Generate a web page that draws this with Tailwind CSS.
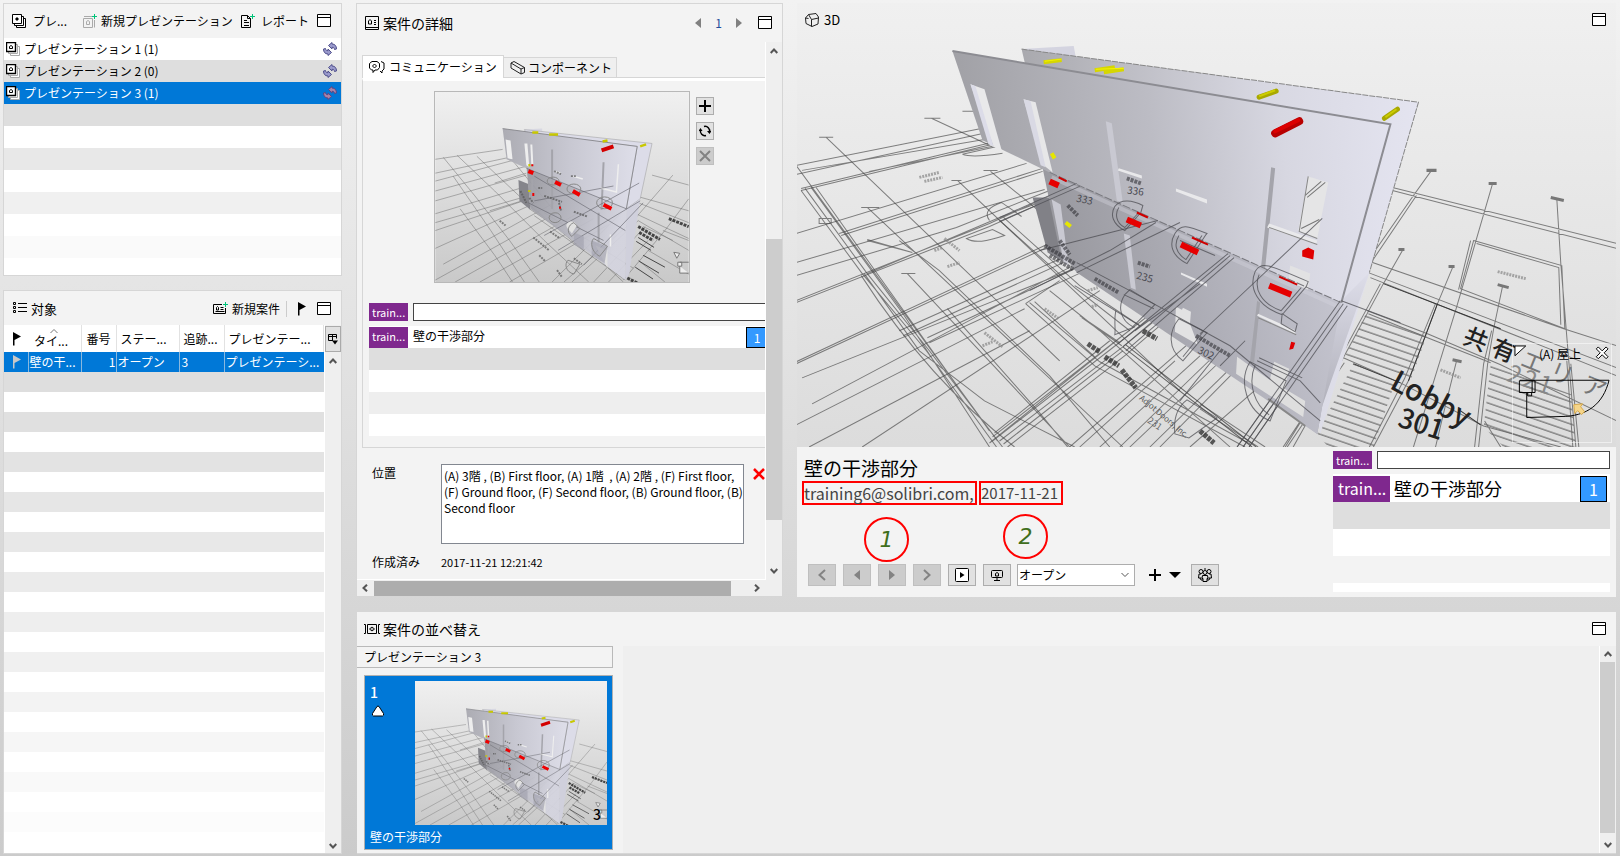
<!DOCTYPE html>
<html lang="ja">
<head>
    <meta charset="UTF-8">
    <meta name="viewport" content="width=device-width, initial-scale=1.0">
    <title>案件の詳細</title>
    <script src="https://cdn.jsdelivr.net/npm/@tailwindcss/browser@4"></script>
</head>
<body class="h-screen flex gap-3.5 pt-[3px] pl-[3px] pr-1 pb-0.5 overflow-hidden bg-linear-to-b from-[#f2f2f2] to-[#cbcbcb] text-black text-xs font-['Noto_Sans_CJK_JP',sans-serif]">

    <!-- Shared icons -->
    <svg class="absolute size-0" xmlns="http://www.w3.org/2000/svg">
        <symbol id="i-window" viewBox="0 0 14 14"><path d="M.5 .5h13v12H.5zM.5 3.5h13" fill="#fff" stroke="#000"/></symbol>
        <symbol id="i-stack" viewBox="0 0 14 14"><path d="M4.500 4.500h9v9h-9z" fill="#fff" stroke="#aaa"/><path d="M2.500 2.500h9v9h-9z" fill="#fff" stroke="#aaa"/><path d="M.5 .5h9v9h-9z" fill="#fff" stroke="#000" stroke-width="1.400"/><path d="M3.500 6.500v-2l1.500-1 1.500 1v2z" fill="none" stroke="#000"/></symbol>
        <symbol id="i-stack-dark" viewBox="0 0 14 14"><path d="M4.500 4.500h9v9h-9z" fill="#fff" stroke="#000"/><path d="M2.500 2.500h9v9h-9z" fill="#fff" stroke="#000"/><path d="M.5 .5h9v9h-9z" fill="#fff" stroke="#000"/><path d="M3 5l2-2 2 2-2 2z" fill="#000"/></symbol>
        <symbol id="i-sync" viewBox="0 0 14 14"><path d="M5.500 3.500L9 .5V2c3 0 4.500 2 4.500 5l-2 .5c0-1.500-1-2.200-2.500-2.200V7zM8.500 10.500L5 13.500V12c-3 0-4.500-2-4.500-5l2-.5c0 1.500 1 2.200 2.500 2.200V7z" fill="#9a9acc" stroke="#50508c"/></symbol>
        <symbol id="i-sync-red" viewBox="0 0 14 14"><path d="M5.500 3.500L9 .5V2c3 0 4.500 2 4.500 5l-2 .5c0-1.500-1-2.200-2.500-2.200V7zM8.500 10.500L5 13.500V12c-3 0-4.500-2-4.500-5l2-.5c0 1.500 1 2.200 2.500 2.200V7z" fill="#a883a8" stroke="#5c4684"/></symbol>
        <symbol id="i-flag" viewBox="0 0 10 14"><path d="M1 0l8 4.500L2.500 8v5.500H1z" fill="currentColor"/></symbol>
        <symbol id="i-up" viewBox="0 0 8 6"><path d="M.7 5L4 1.500 7.300 5" fill="none" stroke="#555" stroke-width="2"/></symbol>
        <symbol id="i-down" viewBox="0 0 8 6"><path d="M.7 1L4 4.500 7.300 1" fill="none" stroke="#555" stroke-width="2"/></symbol>
        <symbol id="i-left" viewBox="0 0 6 8"><path d="M5 .7L1.500 4 5 7.300" fill="none" stroke="#555" stroke-width="2"/></symbol>
        <symbol id="i-right" viewBox="0 0 6 8"><path d="M1 .7L4.500 4 1 7.300" fill="none" stroke="#555" stroke-width="2"/></symbol>
        <linearGradient id="floor" x1="0" y1="0" x2="0" y2="1"><stop offset="0" stop-color="#f0f0f0"/><stop offset="1" stop-color="#c9c9c9"/></linearGradient>
        <linearGradient id="twall" x1="0" y1="0" x2="1" y2="0"><stop offset="0" stop-color="#acacb3"/><stop offset=".5" stop-color="#c8c8d2"/><stop offset="1" stop-color="#dedee9"/></linearGradient>
        <linearGradient id="tlow" x1="0" y1="0" x2="1" y2=".3"><stop offset="0" stop-color="#96969d"/><stop offset=".6" stop-color="#b9b9c3"/><stop offset="1" stop-color="#d4d4df"/></linearGradient>

        <!-- Slide preview of the model -->
        <symbol id="slide" viewBox="0 0 256 192">
            <path d="M0 0h256v192H0z" fill="url(#floor)"/>
            <path d="M0 68L68 58M0 82L75 66M0 90L90 66M0 100L92 75M0 110L92 84M0 123L90 96M0 132L90 106M0 140L95 108M0 158L110 108M8 174L120 112M0 190L130 118M20 192L145 122M45 192L160 128M75 192L175 134M22 64L60 100 110 150 155 192M42 65L90 110 150 160M8 66L40 105 75 150 105 192M18 85L56 140 90 192M25 118L60 165 78 192M72 62L120 120M95 118L150 155 190 192M100 125L192 190M110 122L200 178M60 92L92 82M55 120L94 108M130 192L200 130 240 84M138 192L205 130M118 192L190 120M160 192L212 136M219 84L256 94M206 106L256 120M200 110L256 132M192 118L256 148M205 130L256 160M190 190L232 140 256 108M230 140L256 150M210 136L240 150M215 160L256 184M205 170L232 192M175 192L215 150" fill="none" stroke="#606060" stroke-opacity=".45"/>
            <path d="M90 38l18-1v8z" fill="#d8d8e2"/>
            <path d="M90 38L219 52 207 108 193 118 204 55 92 42z" fill="#dcdce8" stroke="#999" stroke-width=".5"/>
            <path d="M193 118L207 108 196 184 192 190z" fill="#d0d0dc"/>
            <path d="M84 89l10 4 2 26-11-9z" fill="#85858b"/>
            <path d="M92 74L193 118 192 190 96 118z" fill="url(#tlow)" fill-opacity=".92"/>
            <path d="M68 37L204 55 193 118 92 77 72 68z" fill="url(#twall)"/>
            <path d="M68 37L204 55 193 118" fill="none" stroke="#8d8d92"/>
            <path d="M71 48l5 1 2 19-5-1zM90 52l3 0 2 24-3-2zM96 53h2l1 20h-2z" fill="#eee"/>
            <path d="M118 58v60M170 71l-2 48M165 122v30M98 88v22" stroke="#a4a4ab" stroke-width="2"/>
            <path d="M185 73l-2 28-16-4M139 85l10 3M120 80l7 2M177 144v12" fill="none" stroke="#eee" stroke-width="1.500"/>
            <path d="M92 77L193 118M100 110L180 95M110 145L206 92M124 160L207 110M150 175L210 112M94 112L170 150M100 85L192 140" fill="none" stroke="#606068" stroke-opacity=".6"/>
            <path d="M133 137c-3-6 8-9 10-2l-5 8zM162 155l12 5v18z" fill="#e1e1e1"/>
            <path d="M140 142l10 4v14l-10-6zM158 150l16 6-3 17-13-8z" fill="#a4a4b0" fill-opacity=".7"/>
            <g fill="none" stroke="#888"><ellipse cx="119" cy="90" rx="6" ry="4"/><ellipse cx="140" cy="98" rx="7" ry="5"/><ellipse cx="171" cy="112" rx="8" ry="6"/><ellipse cx="121" cy="127" rx="6" ry="5"/><path d="M140 132l6 6-8 8c-6-4-4-12 2-14zM160 148l14 8-8 10c-8-4-10-14-6-18zM134 170l12 4-6 10c-8-2-10-10-6-14z"/></g>
            <path d="M86 100l6 12M95 107l4 5M125 112l2 8M110 105l18 6M140 121l14 5M116 141l10 7M99 147l16 13M104 97h4M120 80l7 3M137 85h5M123 180l5 7M140 168l8 6M65 130l6 5M105 165l6 6" stroke="#555" stroke-opacity=".7" stroke-width="2" stroke-dasharray="2 1"/>
            <path d="M205 136l22 13M206 142l14 8M236 128l20 8M194 188l12 6" stroke="#222" stroke-opacity=".8" stroke-width="3" stroke-dasharray="3 1"/>
            <path d="M205 147l16 10M203 151l15 9M210 165l22 12M206 171l20 12M202 177l18 12" stroke="#444"/>
            <path d="M241 162l6 1-3 5zM245 172h4v4h-4zM247 176v7h9M247 172h9" fill="#eee" stroke="#777"/>
            <path d="M168 59l12-4" stroke="#d40000" stroke-width="4"/>
            <path d="M94 80l5 2M121 91l6 3M139 100l7 4M170 114l8 4" stroke="#e00" stroke-width="4"/>
            <path d="M98 73v2M99 102v3M126 116v2" stroke="#e00" stroke-width="2"/>
            <path d="M98 41h6M115 43h9M169 50l5-1M207 55l6-2M94 74h2M95 99v2" stroke="#c8c800" stroke-width="2.500"/>
        </symbol>
    </svg>

    <!-- Left column -->
    <aside class="w-[339px] shrink-0 flex flex-col gap-3.5">
        <section class="h-[273px] shrink-0 flex flex-col border border-[#d6d6d6] bg-white overflow-hidden">
            <header class="h-[34px] shrink-0 flex items-center pl-2 bg-[#f3f3f3] whitespace-nowrap">
                <h2 class="flex items-center gap-[7px] w-[71px]">
                    <svg class="size-3.5"><use href="#i-stack-dark"/></svg>プレ...
                </h2>
                <button class="flex items-center gap-1 w-[158px]">
                    <svg class="size-3.5 shrink-0" viewBox="0 0 14 14" fill="none"><path d="M.5 4.500h9v9h-9zM11.500 6v7.500" stroke="#aaa"/><path d="M3.500 10.500v-3l1.500-1 1.500 1v3zM1 2.500h8" stroke="#aaa"/><path d="M11.500 0v5M9 2.500h5" stroke="#00c47a"/></svg>新規プレゼンテーション
                </button>
                <button class="flex items-center gap-1.5 w-[76px]">
                    <svg class="size-3.5 shrink-0" viewBox="0 0 14 14" fill="none"><path d="M.5 1.500h6l3 3v9h-9zM6.500 1.500v3h3M3 6.500h3M3 8.500h5M3 11.500h5" stroke="#000"/><path d="M11.500 0v5M9 2.500h5" stroke="#00c47a"/></svg>レポート
                </button>
                <button aria-label="最大化"><svg class="size-3.5 block"><use href="#i-window"/></svg></button>
            </header>
            <ul id="presentations" class="flex-1 whitespace-nowrap">
                <li><button class="w-full h-[22px] flex items-center gap-1 pl-0.5 pr-1"><svg class="size-3.5"><use href="#i-stack"/></svg>プレゼンテーション 1 (1)<svg class="size-3.5 ml-auto"><use href="#i-sync"/></svg></button></li>
                <li class="bg-[#dedede]"><button class="w-full h-[22px] flex items-center gap-1 pl-0.5 pr-1"><svg class="size-3.5"><use href="#i-stack"/></svg>プレゼンテーション 2 (0)<svg class="size-3.5 ml-auto"><use href="#i-sync"/></svg></button></li>
                <li class="bg-[#0078d7] text-white"><button class="w-full h-[22px] flex items-center gap-1 pl-0.5 pr-1"><svg class="size-3.5"><use href="#i-stack"/></svg>プレゼンテーション 3 (1)<svg class="size-3.5 ml-auto"><use href="#i-sync-red"/></svg></button></li>
                <li class="h-[22px] bg-[#dedede]"></li>
                <li class="h-[22px]"></li>
                <li class="h-[22px] bg-[#e8e8e8]"></li>
                <li class="h-[22px]"></li>
                <li class="h-[22px] bg-[#f0f0f0]"></li>
                <li class="h-[22px]"></li>
                <li class="h-[22px] bg-[#fafafa]"></li>
            </ul>
        </section>

        <section class="flex-1 min-h-0 flex flex-col border border-[#d6d6d6] bg-white overflow-hidden">
            <header class="h-[34px] shrink-0 flex items-center pl-[9px] pr-2.5 pt-px bg-[#f3f3f3] whitespace-nowrap">
                <h2 class="flex items-center gap-1 text-[13px] mr-auto">
                    <svg class="size-3.5" viewBox="0 0 14 14" fill="none" stroke="#000"><path d="M.5 1.500h2v2h-2zM.5 5.500h2v2h-2zM.5 9.500h2v2h-2zM5 2.500h9M5 6.500h9M5 10.500h9"/></svg>対象
                </h2>
                <button class="flex items-center gap-1 pr-1.5 border-r border-[#ccc]">
                    <svg class="h-3.5 w-[15px]" viewBox="0 0 15 14" fill="none"><path d="M9 2.500H.5v9h12V6M2.500 9.500h9M3.500 8V5.500l1-1 1 1V8zM7.500 5.500h3M7.500 7.500h3" stroke="#000"/><path d="M12.500 0v5M10 2.500h5" stroke="#00c47a"/></svg>新規案件
                </button>
                <button class="mx-2.5" aria-label="フラグ"><svg class="h-3.5 w-2.5 block"><use href="#i-flag"/></svg></button>
                <button aria-label="最大化"><svg class="size-3.5 block"><use href="#i-window"/></svg></button>
            </header>
            <div class="flex-1 min-h-0 flex">
                <div class="flex-1 min-w-0 overflow-hidden">
                    <table class="w-full table-fixed border-collapse whitespace-nowrap">
                        <colgroup><col class="w-6"><col class="w-[53px]"><col class="w-[35px]"><col class="w-[63px]"><col class="w-[45px]"><col></colgroup>
                        <thead>
                            <tr class="h-[27px]">
                                <th class="p-0 pl-2"><svg class="h-3.5 w-2.5"><use href="#i-flag"/></svg></th>
                                <th class="p-0 font-normal text-left border-r border-[#e2e2e2]"><svg class="w-2 h-1 mx-auto" viewBox="0 0 8 4"><path d="M.5 4L4 .5 7.500 4" fill="none" stroke="#777"/></svg><span class="block leading-4 pl-1.5">タイ...</span></th>
                                <th class="p-0 font-normal border-r border-[#e2e2e2]">番号</th>
                                <th class="p-0 pl-1 font-normal text-left border-r border-[#e2e2e2]">ステー...</th>
                                <th class="p-0 pl-1 font-normal text-left border-r border-[#e2e2e2]">追跡...</th>
                                <th class="p-0 pl-1 font-normal text-left border-r border-[#e2e2e2]">プレゼンテー...</th>
                            </tr>
                        </thead>
                        <tbody id="issues">
                            <tr class="h-5 bg-[#0078d7] text-white">
                                <td class="p-0 pl-2 border-r border-[#8ab8de]"><svg class="h-3.5 w-2.5 text-[#c8c8c8]"><use href="#i-flag"/></svg></td>
                                <td class="p-0 pl-px border-r border-[#8ab8de]">壁の干...</td>
                                <td class="p-0 text-right border-r border-[#8ab8de]">1</td>
                                <td class="p-0 pl-px border-r border-[#8ab8de]">オープン</td>
                                <td class="p-0 pl-0.5 border-r border-[#8ab8de]">3</td>
                                <td class="p-0 pl-px">プレゼンテーシ...</td>
                            </tr>
                        </tbody>
                    </table>
                </div>
                <div class="w-4 ml-px flex flex-col items-center bg-[#efefef]">
                    <button class="w-full h-[26px] mt-px grid place-items-center border border-[#aaa] bg-[#e1e1e1]" aria-label="列"><svg class="size-3" viewBox="0 0 12 12" fill="none" stroke="#000"><path d="M6 7.500H1.500v-6h8v4M1.500 3.500h8M5.500 1.500v6"/><path d="M5 7.500h6l-3 4z" fill="#000" stroke="none"/></svg></button>
                    <svg class="w-2 h-1.5 mt-1.5"><use href="#i-up"/></svg>
                    <svg class="w-2 h-1.5 mt-auto mb-1"><use href="#i-down"/></svg>
                </div>
            </div>
        </section>
    </aside>

    <div class="flex-1 min-w-0 flex flex-col gap-[15px]">
        <div class="flex-1 min-h-0 flex gap-3.5">

            <!-- Issue details -->
            <section class="w-[427px] shrink-0 flex flex-col border border-[#d6d6d6] bg-[#f3f3f3]">
                <header class="h-[38px] shrink-0 flex items-center pl-2 pr-2.5 pb-px">
                    <h2 class="flex items-center gap-1 text-sm">
                        <svg class="size-3.5" viewBox="0 0 14 14" fill="none" stroke="#000"><path d="M.5 .5h13v13H.5zM1 11.500h12M3.500 8V5l1.500-1.500L6.500 5v3zM9 4.500h2M9 6.500h2M9 8.500h2"/></svg>案件の詳細
                    </h2>
                    <nav class="ml-auto mr-4 flex items-center gap-3.5">
                        <button aria-label="前へ"><svg class="w-1.5 h-2.5 block" viewBox="0 0 6 10"><path d="M6 0v10L0 5z" fill="#808080"/></svg></button>
                        <a href="#" class="text-[#1f4e9c]">1</a>
                        <button aria-label="次へ"><svg class="w-1.5 h-2.5 block" viewBox="0 0 6 10"><path d="M0 0v10l6-5z" fill="#808080"/></svg></button>
                    </nav>
                    <button aria-label="最大化"><svg class="size-3.5 block"><use href="#i-window"/></svg></button>
                </header>
                <div class="flex-1 min-h-0 flex">
                    <div class="flex-1 min-w-0 overflow-hidden pl-[5px] pt-[13px] border-r border-b border-white">
                        <div class="flex items-end whitespace-nowrap">
                            <button class="h-[23px] w-[142px] pl-1.5 flex items-center gap-1 border border-b-0 border-[#d6d6d6] bg-white">
                                <svg class="w-4 h-3.5" viewBox="0 0 16 14" fill="none" stroke="#000"><path d="M3 1.500h5l2.500 2v4l-2 2.500H6l-2 2.500V10H2.500L.5 8V3.500z"/><path d="M12 1.500l3 1.500v6l-2 2v2l-2-2M3.500 6l2-2 2 2-2 2z"/></svg>コミュニケーション
                            </button>
                            <button class="h-[21px] w-[113px] pl-1.5 flex items-center gap-0.5 border border-l-0 border-[#d6d6d6] bg-[#efefef]">
                                <svg class="w-4 h-3.5" viewBox="0 0 16 14" fill="none" stroke="#222"><path d="M1 2l3-1.500 10.500 6v5L11 13 1 7zM1 2l10 6v5M11 8l3.500-1.500"/></svg>コンポーネント
                            </button>
                            <span class="flex-1 border-b border-[#d6d6d6]"></span>
                        </div>
                        <div class="border-l border-b border-[#d6d6d6] border-t-[3px] border-t-white pl-1.5 h-[370px]">
                            <div class="flex justify-center gap-1.5 pt-2.5 pr-[50px]">
                                <svg class="w-64 h-48 shrink-0 ml-16 border border-[#b8b8b8]" preserveAspectRatio="none"><use href="#slide"/></svg>
                                <div class="flex flex-col gap-[7px] pt-1.5">
                                    <button class="size-[18px] grid place-items-center border border-[#adadad] bg-[#e1e1e1]" aria-label="追加"><svg class="size-3" viewBox="0 0 12 12"><path d="M6 0v12M0 6h12" stroke="#000" stroke-width="2"/></svg></button>
                                    <button class="size-[18px] grid place-items-center border border-[#adadad] bg-[#e1e1e1]" aria-label="更新"><svg class="size-3" viewBox="0 0 12 12" fill="none" stroke="#000" stroke-width="1.500"><path d="M5 1.500A4.500 4.500 0 0 1 10.500 7M7 10.500A4.500 4.500 0 0 1 1.500 5"/><path d="M8 6h4.500L10.500 9zM-.5 6h4L1.500 3z" fill="#000" stroke="none"/></svg></button>
                                    <button class="size-[18px] grid place-items-center border border-[#bfbfbf] bg-[#ccc]" aria-label="削除"><svg class="size-3" viewBox="0 0 12 12"><path d="M1 1l10 10M11 1L1 11" stroke="#838383" stroke-width="2"/></svg></button>
                                </div>
                            </div>
                            <div class="flex gap-[5px] mt-5">
                                <label for="comment" class="w-[39px] h-[18px] pl-[3px] leading-[18px] text-[11px] bg-[#7f288e] text-white">train...</label>
                                <input id="comment" type="text" class="flex-1 h-[18px] border border-r-0 border-[#444] bg-white outline-none">
                            </div>
                            <ul class="mt-[5px]">
                                <li class="flex h-[22px] border-t border-white bg-white whitespace-nowrap">
                                    <span class="w-[39px] pl-[3px] leading-[18px] text-[11px] bg-[#7f288e] text-white">train...</span>
                                    <span class="pl-[5px] leading-[18px]">壁の干渉部分</span>
                                    <a href="#" class="ml-auto w-[19px] grid place-items-center pl-0.5 border border-r-0 border-black bg-[#3399ff] text-white">1</a>
                                </li>
                                <li class="h-[22px] bg-[#dedede]"></li>
                                <li class="h-[22px] bg-white"></li>
                                <li class="h-[22px] bg-[#eee]"></li>
                                <li class="h-[22px] bg-white"></li>
                            </ul>
                        </div>
                        <div class="flex mt-4 pl-2.5">
                            <label for="location" class="w-[69px] leading-[18px]">位置</label>
                            <textarea id="location" class="w-[303px] h-20 pl-0.5 pr-0 pt-[3px] border border-[#828790] bg-white leading-4 text-xs resize-none outline-none overflow-hidden">(A) 3階 , (B) First floor, (A) 1階  , (A) 2階 , (F) First floor, (F) Ground floor, (F) Second floor, (B) Ground floor, (B) Second floor</textarea>
                            <button class="ml-[9px] mt-1 self-start" aria-label="位置を削除"><svg class="size-3 block" viewBox="0 0 12 12"><path d="M1 1l10 10M11 1L1 11" stroke="#f00" stroke-width="2.500"/></svg></button>
                        </div>
                        <dl class="flex mt-2.5 pl-2.5"><dt class="w-[69px]">作成済み</dt><dd class="text-[11px] leading-4">2017-11-21 12:21:42</dd></dl>
                    </div>
                    <div class="w-4 flex flex-col items-center bg-[#efefef]">
                        <svg class="w-2 h-1.5 mt-1.5"><use href="#i-up"/></svg>
                        <div class="w-full h-[281px] mt-auto bg-[#cdcdcd]"></div>
                        <svg class="w-2 h-1.5 mt-12 mb-1.5"><use href="#i-down"/></svg>
                    </div>
                </div>
                <div class="h-4 shrink-0 flex items-center bg-[#efefef] pl-[5px] pr-[22px]">
                    <svg class="w-1.5 h-2"><use href="#i-left"/></svg>
                    <div class="w-[357px] h-[15px] ml-1.5 bg-[#adadad]"></div>
                    <svg class="w-1.5 h-2 ml-auto"><use href="#i-right"/></svg>
                </div>
            </section>

            <!-- 3D view -->
            <section class="flex-1 min-w-0 flex flex-col">
                <div class="relative flex-1 min-h-0 overflow-hidden bg-linear-to-b from-[#f0f0f0] to-[#dcdcdc]">
                    <svg class="absolute inset-0 w-full h-full" viewBox="797 3 819 443" preserveAspectRatio="xMidYMid slice" fill="none">
                        <defs>
                            <linearGradient id="front" gradientUnits="userSpaceOnUse" x1="955" y1="150" x2="1390" y2="110"><stop offset="0" stop-color="#a0a0a5"/><stop offset=".45" stop-color="#bcbcc4"/><stop offset=".75" stop-color="#d7d7e1"/><stop offset="1" stop-color="#e2e2ee"/></linearGradient>
                            <linearGradient id="lower" gradientUnits="userSpaceOnUse" x1="1050" y1="260" x2="1350" y2="190"><stop offset="0" stop-color="#97979d"/><stop offset=".5" stop-color="#b0b0b9"/><stop offset="1" stop-color="#cacad5"/></linearGradient>
                            <linearGradient id="back" gradientUnits="userSpaceOnUse" x1="1022" y1="0" x2="1418" y2="0"><stop offset="0" stop-color="#a9a9ae"/><stop offset=".6" stop-color="#d7d7e1"/><stop offset="1" stop-color="#e4e4f0"/></linearGradient>
                            <linearGradient id="side" gradientUnits="userSpaceOnUse" x1="0" y1="270" x2="0" y2="430"><stop offset="0" stop-color="#dedeea"/><stop offset="1" stop-color="#a8a8b1"/></linearGradient>
                            <pattern id="hatch" width="60" height="7" patternUnits="userSpaceOnUse" patternTransform="rotate(19)"><path d="M0 1h60" stroke="#666"/></pattern>
                        </defs>

                        <!-- Floor plan -->
                        <g stroke="#444" stroke-opacity=".65">
                            <path d="M797 165L998 125M797 174L998 130M803 170L998 137M802 188L993 142M802 190L993 144M870 171L993 146M797 233L1027 163M840 233L1043 168M842 235L1043 171M797 262L1045 189M797 275L957 227 1050 190M797 300L990 223 1077 183M797 302L990 226 1077 187M868 273L1000 217 1090 183M797 361L1060 238M797 363L1062 240M803 377L1090 262M813 403L1077 263M797 424L1025 308M810 446L1030 330M863 446L1100 290M900 330L1090 245M904 335L1090 250M928 337L1080 266M930 342L1090 268"/>
                            <path d="M820 137h14M827 137L1060 360M925 118h16M932 118L990 145M963 111h16l16 8M862 207h18M868 207L1123 446M902 273h14M908 273L1070 446M952 180h10M958 180L1180 390M984 170h14M991 171L1100 260M797 165L998 440M802 190L863 273 927 350 997 446M806 188L868 273 930 350 1003 446M812 187L905 315 990 446M817 187L870 262 990 430M865 273L920 350 985 400 1075 446M862 275Q930 380 1015 446M900 240L940 270 1050 375 1110 446M948 308L1040 412 1068 446M820 218h12v5h-12z"/>
                            <path d="M1120 446L1240 330 1340 230M1130 446L1245 337M1100 446L1200 355M1070 446L1200 333 1322 218M1080 446L1175 360M1150 446L1240 358M1160 446L1243 362M1190 446L1300 350M1026 303L1095 365 1245 446M1030 302L1100 361 1250 443M1035 301L1095 356M1026 303L1060 280M1080 315L1120 342M1082 317L1122 345M1050 290L1100 330 1230 446M1000 220L1075 287 1130 330M1004 217L1080 285 1140 325"/>
                            <path d="M1123 346L1252 446M1126 344L1256 446" stroke="#222"/>
                            <path d="M993 440L1118 343 1230 255M993 436L1115 341 1228 253M1000 440L1123 346 1233 256M1004 443L1123 350M1008 446L1126 354 1160 325M995 432L1110 340M990 442L1120 337"/>
                            <path d="M868 240L913 252M868 239l45 13M990 220c-6-8 0-14 12-18l20 14M967 238c8 5 20 3 38-3l-12-6zM963 154c8 3 20 2 40-1M963 154l40-9"/>
                            <path d="M1237 446L1340 300 1413 195 1431 170M1243 446L1343 303 1416 195M1249 446L1346 306M1283 446L1340 360M1287 446L1344 362M1392 187L1616 243M1392 190L1616 248M1492 183L1455 310 1413 446M1556 198L1560 263 1575 446M1473 240L1561 265 1564 328 1460 288zM1476 243L1558 267 1560 324M1470 240l-12 49M1352 255L1563 328 1616 345M1368 272L1616 367M1370 277L1616 375M1402 250L1383 283 1343 357 1293 446M1380 283L1340 357 1285 446M1452 267L1437 303 1408 380 1373 446M1435 303L1404 378 1369 446M1502 285L1493 328 1487 363 1478 446M1491 330L1483 363 1474 446M1456 360L1446 400 1435 446M1367 310L1427 333 1500 364 1616 420M1368 313L1427 337 1490 362M1343 357L1400 382 1483 425 1560 446M1570 363L1578 446M1566 360L1572 446M1484 420L1500 446M1200 403L1265 446M1200 408L1258 446"/>
                        </g>
                        <path d="M1383 283L1500 328M1353 363L1400 382M1460 410L1480 424M1437 303L1408 380" stroke="#333"/>
                        <path d="M1367 310l60 23-17 47-65-25zM1353 363l42 17-22 66h-45l-11-13zM1490 364l80 29 5 53h-72l-20-20z" fill="url(#hatch)"/>
                        <path d="M1426 170h10M1488 183h8M1550 197l13 3M1398 249h6M1448 266h6M1497 284l11 3M1452 359l9 2" stroke="#777" stroke-width="3"/>
                        <path d="M1497 271l28 7M1440 369l20 8M920 177l20-5M925 181l18-4M945 238l15 12M935 250l8-3M948 266l12-4M985 332l18 14M983 345l10-4M1045 308l14 10M1088 290l10-3M1092 306l6-2" stroke="#888" stroke-opacity=".7" stroke-width="3" stroke-dasharray="2 1"/>
                        <path d="M1088 343l12 8M1143 330l14 8M1105 356l14 9M1122 369l14 18M1200 430l14 12" stroke="#333" stroke-opacity=".8" stroke-width="5" stroke-dasharray="4 1"/>
                        <g fill="#222" font-family="Noto Sans CJK JP">
                            <text transform="translate(1461 342) rotate(22)" font-size="24" font-weight="500" x="0 30">共有</text>
                            <text transform="translate(1518 365) rotate(22)" font-size="24" fill="#777" x="0 31 66">エリア</text>
                            <text transform="translate(1505 380) rotate(18)" font-size="24" fill="#888" x="0 16 32">221</text>
                            <text transform="translate(1388 387) rotate(28)" font-size="29" font-weight="500">Lobby</text>
                            <text transform="translate(1396 425) rotate(18)" font-size="27" font-weight="500">301</text>
                            <text transform="translate(1139 398) rotate(40)" font-size="8" fill="#555">Adjot Doors, Inc.</text>
                            <text transform="translate(1147 421) rotate(35)" font-size="9" fill="#666">231</text>
                        </g>

                        <!-- Walls -->
                        <path d="M1022 49L1074 46l3 16-40-3z" fill="#d4d4e0"/>
                        <path d="M1022 49L1418 102 1369 272 1320 433 1300 300 1340 130 1026 66z" fill="url(#back)"/>
                        <path d="M1022 49L1418 102 1369 272" stroke="#888" stroke-dasharray="6 1"/>
                        <path d="M1341 300L1369 272 1322 405 1317 433 1300 420z" fill="url(#side)"/>
                        <path d="M1033 197l17 0 20 65-9-2-13-8z" fill="#818187"/>
                        <path d="M1043 168L1341 300 1317 433 1077 272 1060 250z" fill="url(#lower)"/>
                        <path d="M953 51L1390 124 1341 302 1050 172 983 140z" fill="url(#front)"/>
                        <path d="M953 51L1390 124 1341 302" stroke="#8c8c92" stroke-width="2"/>
                        <path d="M971 84l14 5 18 64-9-7z" fill="#e9e9ea"/><path d="M971 84l5 2 18 60-5-2z" fill="#dcdce8"/>
                        <path d="M1024 99l12 3 17 70-9-7z" fill="#e7e7e8"/><path d="M1024 99l7 2 15 66-5-2z" fill="#d9d9e4"/>
                        <path d="M1106 121l6 2 11 79-6-2zM1052 199l9 5 8 62-5-4zM1124 233l6 2 6 54-5-2z" fill="#c9c9d2"/>
                        <path d="M1271 167l4 1-10 100-4-2zM1257 300l3 2-6 60-4-2z" fill="#a4a4ab"/>
                        <path d="M1308 176l20 6-11 56-19-8z" fill="#e5e5e6"/><path d="M1308 176l-9 55 18 7" stroke="#888"/>
                        <path d="M1305 195l16-14M1307 197l18-15M1301 228l18-9" stroke="#777"/>
                        <path d="M1119 168l23 7v3l-24-8zM1176 188l31 11v4l-31-12zM1269 223l48 17-1 4-49-17zM1258 313l38 17-1 3-38-18zM1181 272l26 11v3l-26-12z" fill="#e9e9eb"/>
                        <path d="M1269 227l48 17M1258 317l38 17" stroke="#888"/>
                        <path d="M1290 265l20 8-2 16-20-8zM1183 307l8 4-1 12 8 21-23-13 1-25 6 3z" fill="#e2e2e3"/>
                        <path d="M1274 361l15 7-6 28-15-10zM1237 356l31 22 37 22-2 16-67-43z" fill="#dedede"/>
                        <path d="M1268 398l37 27" stroke="#888" stroke-width="2"/>
                        <path d="M1050 172L1341 302" stroke="#77777d" stroke-dasharray="8 2"/>
                        <path d="M1052 177L1338 306" stroke="#d5d5de" stroke-opacity=".4" stroke-width="4"/>

                        <!-- Plan lines seen through the lower walls -->
                        <g stroke="#4c4c52" stroke-opacity=".75">
                            <path d="M1000 217L1077 183M1000 221L1080 186M1040 250L1158 220M1077 272L1180 222M1030 290L1110 250 1156 222M1123 346L1230 255M1118 343L1228 253M1126 350L1234 257M1135 330L1200 283M1200 333L1322 218M1237 446L1340 300M1243 446L1343 303M1249 446L1347 305M1077 262L1130 290 1230 345 1320 420M1180 240L1215 255M1341 300L1400 322M1257 360L1300 380 1320 402M1259 357L1302 377M1220 350L1180 400M1245 340L1220 365M1075 285L1140 325"/>
                            <path d="M1141 212l-16 18c-12-6-15-16-10-24 6-8 18-6 28-1zM1139 212l-14 15c-9-4-10-14-6-20M1206 234l-19 29c-16-8-18-20-12-30 6-10 12-8 32 0zM1202 235l-16 24c-11-7-12-16-7-24M1306 286l-24 28c-24-8-34-26-27-43 6-10 12-8 53 10zM1301 287l-20 23c-20-7-28-22-22-36M1155 304l-22 22c-12-6-16-20-8-32l5-5zM1124 294l30 14M1207 332l-24 28c-16-12-14-30-4-42zM1204 330l-21 26M1250 361l36 19-16 40c-24-10-32-40-20-59zM1255 364c-8 20 0 40 14 50M1175 433c-2-18 4-28 12-34l30 18-28 20zM1116 310c-2 10 0 18-1 24l20-8M1282 313l15 10-2 8-14-8z"/>
                        </g>
                        <path d="M1127 178l14 5M1138 262l12 4M1068 205l10 10M1045 245l30 18M1050 255l24 14M1060 240l10 14M1095 278l24 14M1196 335l34 20" stroke="#303036" stroke-opacity=".6" stroke-width="4" stroke-dasharray="3 1"/>
                        <g fill="#4a4a52" font-family="Noto Sans CJK JP" font-size="10">
                            <text transform="translate(1076 201) rotate(12)">333</text>
                            <text transform="translate(1127 193) rotate(8)">336</text>
                            <text transform="translate(1136 278) rotate(15)">235</text>
                            <text transform="translate(1197 352) rotate(25)">302</text>
                        </g>

                        <!-- Clashing beams -->
                        <path d="M1275 133l24-12" stroke="#b80000" stroke-width="8" stroke-linecap="round"/><path d="M1275 131l23-11" stroke="#dc0000" stroke-width="4" stroke-linecap="round"/>
                        <path d="M1050 181l9 4M1127 219l14 6M1181 244l17 8M1269 285l22 9" stroke="#e60000" stroke-width="6"/>
                        <path d="M1059 177l8 4M1137 212l11 5M1192 237l16 7M1279 276l18 8" stroke="#d00000" stroke-width="2"/>
                        <path d="M1302 250l6-3 6 3-1 9-11-3zM1291 341l4 1-2 6-4 1z" fill="#e00000"/>
                        <path d="M1044 62l18-2M1095 70l20-3M1104 72l20-3" stroke="#d6d600" stroke-width="4"/>
                        <path d="M1045 61l17-2M1096 69l28-1" stroke="#f4f400"/>
                        <path d="M1259 97l17-6M1384 118l13-9" stroke="#a8a800" stroke-width="5" stroke-linecap="round"/><path d="M1259 96l16-6M1385 117l11-8" stroke="#cccc00" stroke-width="2"/>
                        <path d="M1052 153l3 5M1066 222l5 4" stroke="#e6e600" stroke-width="4"/>
                    </svg>

                    <header class="relative flex items-center gap-[5px] pl-2 pr-2.5 pt-2 text-sm">
                        <svg class="size-3.5" viewBox="0 0 14 14" fill="none" stroke="#222"><path d="M.5 5L3.500 1.500l7.500-1 2.500 3.500-.5 7-6 2.500-6-3zM3.500 1.500L6.500 6.500l7-1.500M6.500 6.500v7M.5 5l3 .5"/></svg>
                        <h2 class="text-[13px]">3D</h2>
                        <button class="ml-auto" aria-label="最大化"><svg class="size-3.5 block"><use href="#i-window"/></svg></button>
                    </header>

                    <!-- Floor navigator -->
                    <div class="absolute right-1 bottom-1 size-[100px] border border-white/50">
                        <svg class="absolute inset-0 size-full" viewBox="0 0 100 100" fill="none" stroke="#000">
                            <path d="M2 2h11L2 12z" fill="#fff"/>
                            <path d="M7 37h91c-6 24-22 37-49 37l-35 1V50M6.500 37.500h13v12h-13zM19.500 37.500h3v12h-3M15 50v3h4v-4"/>
                            <path d="M87 3l4 4 4-4 2 2-4 4 4 4-2 2-4-4-4 4-2-2 4-4-4-4z" fill="#fff"/>
                            <path d="M62 62l9-1-2 3 4 5-3 3-4-4-3 3z" fill="#f5d58a" stroke="#d6a84a"/>
                        </svg>
                        <span class="absolute left-[26px] top-0.5 text-xs">(A) 屋上</span>
                    </div>
                </div>

                <div class="h-[150px] shrink-0 flex bg-[#f3f3f3]">
                    <div class="relative flex-1 min-w-0 pl-[5px] pt-2">
                        <h3 class="pl-0.5 text-[19px] leading-[26px]">壁の干渉部分</h3>
                        <p class="flex gap-0.5 text-base leading-5 text-[#444] whitespace-nowrap">
                            <span class="w-[175px] h-6 border-2 border-[#f00]">training6@solibri.com,</span>
                            <span class="w-[84px] h-6 border-2 border-[#f00] text-[15px]">2017-11-21</span>
                        </p>
                        <div class="flex items-center mt-[59px] pl-1.5 gap-[7px]">
                            <button class="w-7 h-[22px] grid place-items-center border border-[#bfbfbf] bg-[#ccc]" aria-label="最初"><svg class="w-2 h-3" viewBox="0 0 8 12"><path d="M7 1L1.500 6 7 11" fill="none" stroke="#838383" stroke-width="2"/></svg></button>
                            <button class="w-7 h-[22px] grid place-items-center border border-[#bfbfbf] bg-[#ccc]" aria-label="前へ"><svg class="w-1.5 h-2.5" viewBox="0 0 6 10"><path d="M6 0v10L0 5z" fill="#838383"/></svg></button>
                            <button class="w-7 h-[22px] grid place-items-center border border-[#bfbfbf] bg-[#ccc]" aria-label="次へ"><svg class="w-1.5 h-2.5" viewBox="0 0 6 10"><path d="M0 0v10l6-5z" fill="#838383"/></svg></button>
                            <button class="w-7 h-[22px] grid place-items-center border border-[#bfbfbf] bg-[#ccc]" aria-label="最後"><svg class="w-2 h-3" viewBox="0 0 8 12"><path d="M1 1l5.500 5L1 11" fill="none" stroke="#838383" stroke-width="2"/></svg></button>
                            <button class="w-7 h-[22px] grid place-items-center border border-[#adadad] bg-[#e1e1e1]" aria-label="再生"><svg class="size-3.5" viewBox="0 0 14 14"><rect x=".5" y=".5" width="13" height="13" rx="1" fill="#fff" stroke="#000"/><path d="M5 4v6l4.500-3z"/></svg></button>
                            <button class="w-7 h-[22px] grid place-items-center border border-[#adadad] bg-[#e1e1e1]" aria-label="スライドショー"><svg class="w-3.5 h-3" viewBox="0 0 14 12" fill="none" stroke="#000"><rect x="1.500" y="1.500" width="11" height="7" rx="1"/><path d="M5.500 7V4.500L7 3.500l1.500 1V7zM7 9v2M4 11.500h6"/></svg></button>
                            <div class="relative">
                                <select aria-label="ステータス" class="-ml-px w-[118px] h-[22px] pl-px pr-5 leading-5 appearance-none border border-[#adadad] bg-white text-xs outline-none"><option>オープン</option></select>
                                <svg class="absolute right-1.5 top-2 w-2 h-1.5 pointer-events-none" viewBox="0 0 8 6"><path d="M.5 1L4 4.500 7.500 1" fill="none" stroke="#555"/></svg>
                            </div>
                            <button class="ml-[7px] flex items-center gap-2" aria-label="追加"><svg class="size-3" viewBox="0 0 12 12"><path d="M6 0v12M0 6h12" stroke="#000" stroke-width="2"/></svg><svg class="w-3 h-1.5" viewBox="0 0 12 6"><path d="M0 0h12L6 6z"/></svg></button>
                            <button class="ml-[3px] w-7 h-[22px] grid place-items-center border border-[#adadad] bg-[#e1e1e1]" aria-label="担当者"><svg class="size-3.5" viewBox="0 0 14 14" fill="none" stroke="#000"><circle cx="3" cy="3.500" r="2"/><circle cx="11" cy="3.500" r="2"/><circle cx="7" cy="4.500" r="2"/><path d="M3 6H1L.5 10h3M11 6h2l.5 4h-3M4.500 7.500h5l.5 3H9v3H5v-3H4zM2 10l1 2h2M12 10l-1 2H9M7 0v2"/></svg></button>
                        </div>
                        <span class="absolute left-[67px] top-[70px] size-[45px] grid place-items-center rounded-full border-2 border-[#f00] text-[22px] italic font-medium text-[#3f6e1c] font-['DejaVu_Sans',sans-serif]">1</span>
                        <span class="absolute left-[206px] top-[67px] size-[45px] grid place-items-center rounded-full border-2 border-[#f00] text-[22px] italic font-medium text-[#3f6e1c] font-['DejaVu_Sans',sans-serif]">2</span>
                    </div>
                    <div class="w-[277px] mr-1.5 pt-1">
                        <div class="flex gap-[5px]">
                            <label for="reply" class="w-[39px] h-[18px] pl-[3px] leading-[18px] text-[11px] bg-[#7f288e] text-white">train...</label>
                            <input id="reply" type="text" class="flex-1 min-w-0 h-[18px] border border-[#444] bg-white outline-none">
                        </div>
                        <ul class="mt-[5px]">
                            <li class="flex h-7 pr-[3px] border-t-2 border-white bg-white text-lg leading-6 whitespace-nowrap">
                                <span class="w-[57px] pl-[5px] text-base leading-6 bg-[#7f288e] text-white">train...</span>
                                <span class="pl-1">壁の干渉部分</span>
                                <a href="#" class="ml-auto w-[27px] text-center text-base leading-6 border border-black bg-[#3399ff] text-white">1</a>
                            </li>
                            <li class="h-[27px] bg-[#dedede]"></li>
                            <li class="h-[27px] bg-white"></li>
                            <li class="h-[27px]"></li>
                            <li class="h-[9px] bg-white"></li>
                        </ul>
                    </div>
                </div>
            </section>
        </div>

        <!-- Slide sorter -->
        <section class="h-[242px] shrink-0 flex flex-col ml-px border-b border-[#d6d6d6] bg-[#f3f3f3]">
            <header class="h-[34px] shrink-0 flex items-center pl-[7px] pr-2.5">
                <h2 class="flex items-center gap-[3px] text-sm">
                    <svg class="w-4 h-3.5" viewBox="0 0 16 14" fill="none" stroke="#000"><path d="M0 2.500h1.500v9H0M16 2.500h-1.500v9H16M3.500 2.500h9v9h-9zM5.500 7L8 5l2.500 2L8 9zM7.500 7h1"/></svg>案件の並べ替え
                </h2>
                <button class="ml-auto" aria-label="最大化"><svg class="size-3.5 block"><use href="#i-window"/></svg></button>
            </header>
            <div class="flex-1 min-h-0 flex">
                <div class="w-64">
                    <h3 class="h-[22px] pl-[7px] leading-5 border border-l-0 border-[#b9b9b9]">プレゼンテーション 3</h3>
                    <button class="block relative mt-[7px] ml-[7px] w-[249px] h-[175px] text-left border border-[#b0b0b0] bg-[#0078d7] text-white">
                        <span class="absolute left-[5px] top-1.5 text-sm font-medium">1</span>
                        <svg class="absolute left-1.5 top-[29px] w-3.5 h-3" viewBox="0 0 14 12"><path d="M6 1.500Q7 .5 8 1.500l4.500 7q.5 2-1 2.500h-9q-1.500-.5-1-2.500z" fill="#fff" stroke="#000"/></svg>
                        <svg class="absolute right-[5px] top-[5px] w-48 h-36"><use href="#slide"/></svg>
                        <span class="absolute right-[5px] top-32 w-3.5 text-sm font-medium text-black">3</span>
                        <span class="absolute left-[5px] bottom-1">壁の干渉部分</span>
                    </button>
                </div>
                <div class="flex-1 ml-2.5 bg-[#efefef]"></div>
                <div class="w-[17px] pr-px border-l border-white flex flex-col items-center bg-[#efefef]">
                    <svg class="w-2 h-1.5 my-[5px]"><use href="#i-up"/></svg>
                    <div class="w-full flex-1 bg-[#cdcdcd]"></div>
                    <svg class="w-2 h-1.5 mt-[9px] mb-[5px]"><use href="#i-down"/></svg>
                </div>
            </div>
        </section>
    </div>

    <script>
        // Empty rows below the issue, fading out towards the bottom
        const stripes = ['#dedede', '#e0e0e0', '#e3e3e3', '#e6e6e6', '#e8e8e8', '#ebebeb', '#eeeeee', '#f0f0f0', '#f3f3f3', '#f6f6f6', '#f9f9f9', '#fcfcfc'];
        const issues = document.getElementById('issues');
        stripes.forEach(color => {
            const row = issues.insertRow();
            row.className = 'h-5';
            row.style.backgroundColor = color;
            row.insertCell().colSpan = 6;
            const blank = issues.insertRow();
            blank.className = 'h-5';
            blank.insertCell().colSpan = 6;
        });
    </script>
</body>
</html>
